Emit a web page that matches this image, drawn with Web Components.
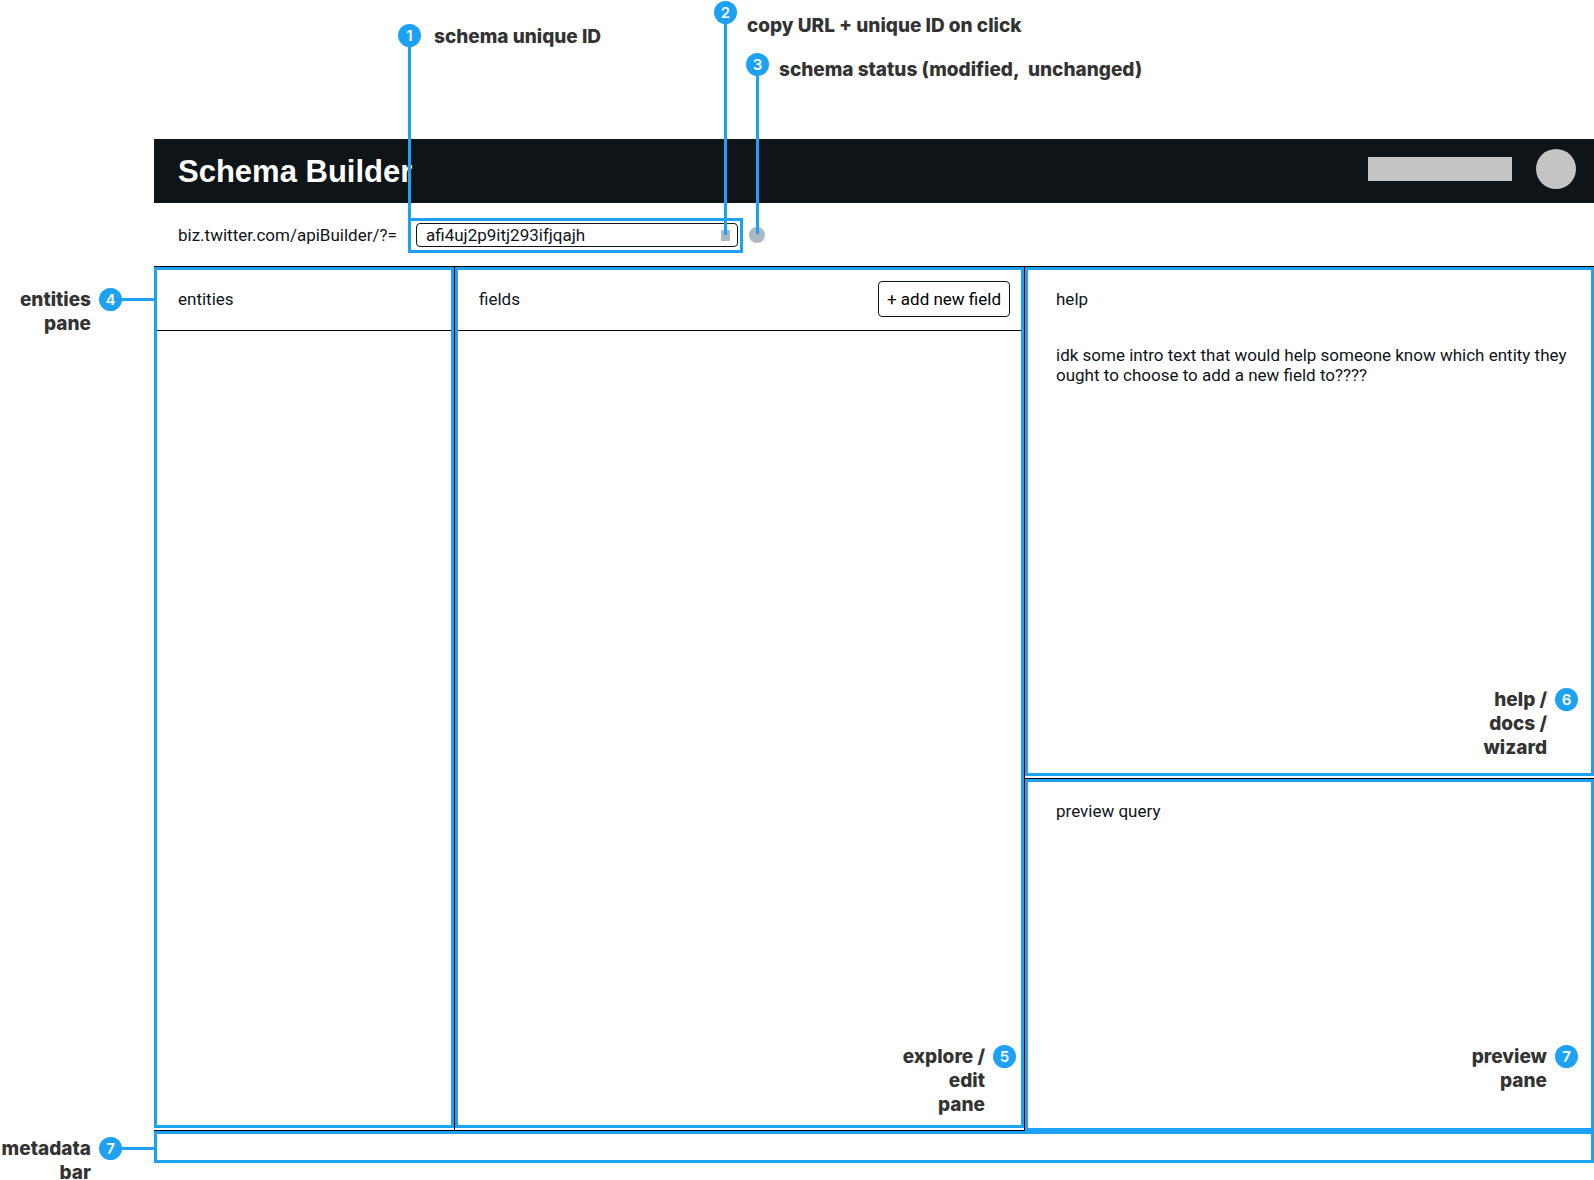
<!DOCTYPE html>
<html lang="en">
<head>
<meta charset="utf-8">
<title>Schema Builder</title>
<style>
  html, body { margin: 0; height: 100%; }
  body {
    background: #fff;
    color: #0f1419;
    font: 17px/20px Roboto, "Liberation Sans", sans-serif;
    --accent: #1da1f2;
    --ink: #0f1419;
    --note: #333;
    --gutter: 154px;
  }
</style>
</head>
<body>
<schema-page></schema-page>

<script>
  const define = (name, html, setup) => {
    const template = document.createElement('template');
    template.innerHTML = html;
    customElements.define(name, class extends HTMLElement {
      constructor() {
        super();
        this.attachShadow({ mode: 'open' }).append(template.content.cloneNode(true));
      }
      connectedCallback() { if (setup) setup(this, this.shadowRoot); }
    });
  };

  // Numbered round marker
  define('note-badge', `
    <style>
      :host {
        display: flex; flex: none; align-items: center; justify-content: center;
        width: 23px; height: 23px; border-radius: 50%;
        background: var(--accent); color: #fff;
        font: 600 15px/23px Inter, sans-serif;
      }
    </style>
    <slot></slot>`);

  // Label followed by its marker, with an optional line out to the right
  define('side-note', `
    <style>
      :host { display: flex; justify-content: flex-end; align-items: flex-start; gap: 8px; }
      .label { text-align: right; white-space: nowrap; color: var(--note); font: 800 19px/24px Inter, sans-serif; }
      .line { display: none; width: 33px; height: 3px; margin: 10px 0 0 -9px; background: var(--accent); }
      :host([line]) .line { display: block; }
    </style>
    <div class="label"><slot></slot></div>
    <note-badge></note-badge>
    <div class="line"></div>`,
    (host, root) => { root.querySelector('note-badge').textContent = host.getAttribute('number'); });

  // Marker whose line drops down onto the control that it describes
  define('drop-note', `
    <style>
      :host { position: absolute; display: flex; align-items: flex-start; pointer-events: none; }
      .stem { display: flex; flex-direction: column; align-items: center; height: 100%; }
      .line { flex: 1; width: 3px; background: var(--accent); }
      .label { white-space: nowrap; color: var(--note); font: 800 19px/24px Inter, sans-serif; padding: var(--drop, 0) 0 0 var(--space, 10px); }
    </style>
    <div class="stem"><note-badge></note-badge><div class="line"></div></div>
    <div class="label"><slot></slot></div>`,
    (host, root) => { root.querySelector('note-badge').textContent = host.getAttribute('number'); });

  define('app-header', `
    <style>
      :host { display: flex; align-items: center; height: 64px; padding: 0 18px 0 24px; background: var(--ink); }
      h1 { flex: 1; margin: 0; padding-top: 2px; color: #fff; font: 700 31px/40px "Liberation Sans", sans-serif; }
      .tools { display: flex; align-items: center; gap: 24px; padding-bottom: 4px; }
      .bar { width: 144px; height: 24px; background: #c4c4c4; }
      .avatar { width: 40px; height: 40px; border-radius: 50%; background: #c4c4c4; }
    </style>
    <h1><slot></slot></h1>
    <div class="tools"><div class="bar"></div><div class="avatar"></div></div>`);

  define('url-bar', `
    <style>
      :host { display: flex; align-items: flex-start; height: 48px; padding: 15px 0 0 24px; border-bottom: 1px solid #000; }
      label { width: 230px; padding-top: 7px; }
      .frame { box-sizing: border-box; width: 335px; padding: 2px 2px 3px 5px; border: 3px solid var(--accent); }
      .field { display: flex; align-items: center; box-sizing: border-box; height: 24px; padding: 0 7px 0 9px; border: 1px solid var(--ink); border-radius: 4px; }
      input { flex: 1; min-width: 0; padding: 0; border: 0; outline: 0; background: none; color: inherit; font: inherit; }
      button { width: 9px; height: 11px; padding: 0; border: 0; border-radius: 1px; background: #aab8c2; }
      .status { width: 16px; height: 16px; margin: 9px 0 0 6px; border-radius: 50%; background: #aab8c2; }
    </style>
    <label for="id">biz.twitter.com/apiBuilder/?=</label>
    <div class="frame"><div class="field">
      <input id="id" type="text" value="afi4uj2p9itj293ifjqajh" spellcheck="false">
      <button type="button" aria-label="copy"></button>
    </div></div>
    <div class="status"></div>`);

  define('app-pane', `
    <style>
      :host { display: flex; flex-direction: column; box-sizing: border-box; min-height: 0; border: 3px solid var(--accent); }
      header { display: flex; align-items: center; justify-content: space-between; height: 58px; padding: 0 11px 2px 21px; }
      :host([ruled]) header { border-bottom: 1px solid #000; }
      :host([wide]) header { padding-left: 28px; }
      h2 { margin: 0; font: inherit; }
      ::slotted(p) { margin: 15px 20px 0 28px; }
      ::slotted(side-note) { margin: auto var(--side, 0) var(--foot, 0) 0; }
    </style>
    <header><h2></h2><slot name="action"></slot></header>
    <slot></slot>`,
    (host, root) => { root.querySelector('h2').textContent = host.getAttribute('heading'); });

  define('outline-button', `
    <style>
      :host { display: block; }
      button { display: block; height: 36px; padding: 0 8px; border: 1px solid var(--ink); border-radius: 4px; background: #fff; color: #000; font: inherit; }
    </style>
    <button type="button"><slot></slot></button>`);

  define('schema-page', `
    <style>
      :host { position: relative; display: flex; flex-direction: column; box-sizing: border-box; height: 100vh; padding: 139px 0 17px; overflow: hidden; }
      app-header, url-bar { flex: none; margin-left: var(--gutter); }
      .row { display: grid; grid-template-columns: var(--gutter) minmax(0, 1fr); }
      .main { flex: 1; min-height: 0; }
      .main > side-note { padding-top: 21px; }
      .panes { display: grid; grid-template-columns: 300px minmax(0, 1fr) minmax(0, 1fr); column-gap: 1px; background: #000; }
      .left { display: flex; flex-direction: column; background: #fff; padding-bottom: 2px; margin-bottom: 1px; }
      .left > app-pane { flex: 1; }
      .right { display: grid; grid-template-rows: minmax(0, 509fr) 3px minmax(0, 352fr); background: #fff; }
      .split { border-bottom: 1px solid #000; }
      .fields { --side: 5px; --foot: 8px; }
      .help { --side: 13px; --foot: 13px; }
      .preview { --side: 13px; --foot: 35px; }
      .meta { flex: none; height: 32px; }
      .meta > side-note { padding-top: 6px; }
      .strip { box-sizing: border-box; height: 32px; border: 3px solid var(--accent); }
    </style>
    <app-header>Schema Builder</app-header>
    <url-bar></url-bar>
    <div class="row main">
      <side-note number="4" line>entities<br>pane</side-note>
      <div class="panes">
        <div class="left"><app-pane heading="entities" ruled></app-pane></div>
        <div class="left">
          <app-pane class="fields" heading="fields" ruled>
            <outline-button slot="action">+ add new field</outline-button>
            <side-note number="5">explore /<br>edit<br>pane</side-note>
          </app-pane>
        </div>
        <div class="right">
          <app-pane class="help" heading="help" wide>
            <p>idk some intro text that would help someone know which entity they ought to choose to add a new field to????</p>
            <side-note number="6">help /<br>docs /<br>wizard</side-note>
          </app-pane>
          <div class="split"></div>
          <app-pane class="preview" heading="preview query" wide>
            <side-note number="7">preview<br>pane</side-note>
          </app-pane>
        </div>
      </div>
    </div>
    <div class="row meta">
      <side-note number="7" line>metadata<br>bar</side-note>
      <div class="strip"></div>
    </div>
    <drop-note number="1" style="left: 398px; top: 24px; height: 195px; --drop: 1px; --space: 13px">schema unique ID</drop-note>
    <drop-note number="2" style="left: 714px; top: 1px; height: 234px; --drop: 13px">copy URL + unique ID on click</drop-note>
    <drop-note number="3" style="left: 746px; top: 53px; height: 181px; --drop: 5px">schema status (modified,&nbsp; unchanged)</drop-note>`);
</script>
</body>
</html>
